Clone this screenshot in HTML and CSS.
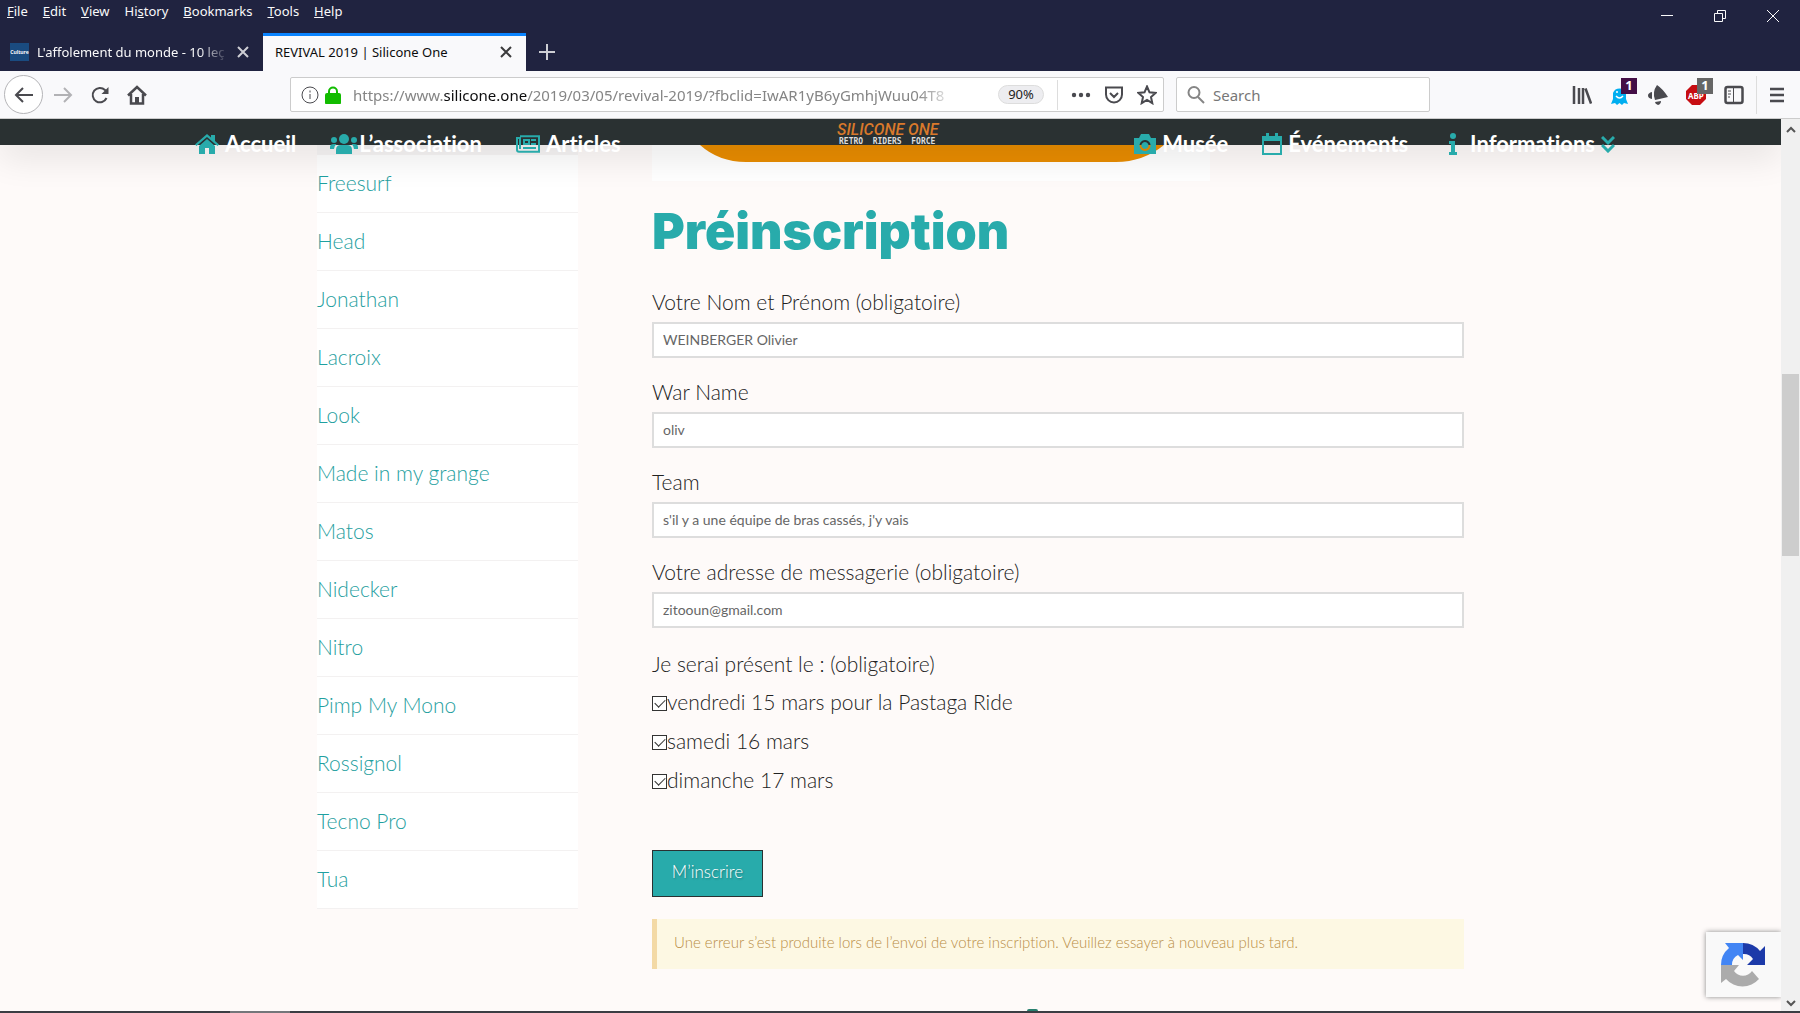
FILE: index.html
```html
<!DOCTYPE html>
<html lang="fr">
<head>
    <title>REVIVAL 2019 | Silicone One</title>
    <meta charset="utf-8">
    <meta name="viewport" content="width=device-width, initial-scale=1.0">
    <link rel="stylesheet" href="styles.css">
</head>
<body>
    <header class="titlebar">
        <div class="titlebar-top">
            <nav class="menubar">
                <button><u>F</u>ile</button>
                <button><u>E</u>dit</button>
                <button><u>V</u>iew</button>
                <button>Hi<u>s</u>tory</button>
                <button><u>B</u>ookmarks</button>
                <button><u>T</u>ools</button>
                <button><u>H</u>elp</button>
            </nav>
            <div class="window-controls">
                <button aria-label="Minimize"><svg width="12" height="12" viewBox="0 0 12 12"><path d="M0 5.500h12"/></svg></button>
                <button aria-label="Restore"><svg width="12" height="12" viewBox="0 0 12 12"><path d="M.5 3.500h8v8h-8zM3.500 3V.5h8v8H9"/></svg></button>
                <button aria-label="Close"><svg width="12" height="12" viewBox="0 0 12 12"><path d="M0 0l12 12M12 0L0 12"/></svg></button>
            </div>
        </div>
        <div class="tabs">
            <div class="tab">
                <span class="favicon">Culture</span>
                <span class="tab-title tab-fade">L'affolement du monde - 10 leç</span>
                <button class="tab-close" aria-label="Close tab"><svg width="12" height="12" viewBox="0 0 12 12"><path d="M1 1l10 10M11 1L1 11"/></svg></button>
            </div>
            <div class="tab tab-active">
                <span class="tab-title">REVIVAL 2019 | Silicone One</span>
                <button class="tab-close" aria-label="Close tab"><svg width="12" height="12" viewBox="0 0 12 12"><path d="M1 1l10 10M11 1L1 11"/></svg></button>
            </div>
            <button class="tab-new" aria-label="New tab"><svg width="16" height="16" viewBox="0 0 16 16"><path d="M8 0v16M0 8h16"/></svg></button>
        </div>
    </header>

    <div class="toolbar">
        <div class="nav-buttons">
            <button class="back" aria-label="Back"><svg width="20" height="20" viewBox="0 0 20 20"><path d="M19 10H2M9 3l-7 7 7 7"/></svg></button>
            <button class="forward" aria-label="Forward"><svg width="20" height="20" viewBox="0 0 20 20"><path d="M1 10h17M11 3l7 7-7 7"/></svg></button>
            <button aria-label="Reload"><svg width="20" height="20" viewBox="0 0 20 20"><path d="M16.500 13A7.200 7.200 0 1 1 15 5l2 2"/><path d="M18.500 2v7h-7z" class="fill"/></svg></button>
            <button aria-label="Home"><svg width="20" height="20" viewBox="0 0 20 20"><path d="M1 10.500L10 2l9 8.500M4 9v9.500h12V9" stroke-width="2.500"/><path d="M8 18v-6h4v6z" class="fill"/></svg></button>
        </div>
        <div class="urlbar">
            <svg width="18" height="18" viewBox="0 0 18 18" class="info"><circle cx="9" cy="9" r="8"/><path d="M9 8v5M9 4.500v2"/></svg>
            <svg width="16" height="18" viewBox="0 0 16 18" class="lock"><path d="M4 9V5.500a4 4 0 0 1 8 0V9"/><rect x="1" y="8" width="14" height="9.500" rx="1"/></svg>
            <div class="url">https://www.<b>silicone.one</b>/2019/03/05/revival-2019/?fbclid=IwAR1yB6yGmhjWuu04T8</div>
            <button class="zoom-level">90%</button>
            <span class="divider"></span>
            <button aria-label="Page actions"><svg width="20" height="20" viewBox="0 0 20 20" class="dots"><circle cx="3" cy="10" r="2.200"/><circle cx="10" cy="10" r="2.200"/><circle cx="17" cy="10" r="2.200"/></svg></button>
            <button aria-label="Save to Pocket"><svg width="20" height="20" viewBox="0 0 20 20"><path d="M2 2.500h16v7a8 8 0 0 1-16 0zM6 8l4 4 4-4"/></svg></button>
            <button aria-label="Bookmark"><svg width="20" height="20" viewBox="0 0 20 20"><path d="M10 1.500l2.500 5.800 6 .6-4.500 4.100 1.300 6.200-5.300-3.200-5.300 3.200L6 12 1.500 7.900l6-.6z"/></svg></button>
        </div>
        <label class="searchbar">
            <svg width="20" height="20" viewBox="0 0 20 20"><circle cx="8" cy="7.500" r="5.500"/><path d="M12 12l6 6"/></svg>
            <input type="search" placeholder="Search" aria-label="Search">
        </label>
        <div class="extensions">
            <button aria-label="Library"><svg width="20" height="20" viewBox="0 0 20 20"><path d="M2 1v18M7 3v16M11 3v16M13.500 3.500L19 18.500" stroke-width="2.500"/></svg></button>
            <button aria-label="Ghostery"><svg width="20" height="20" viewBox="0 0 20 20"><path d="M3 14V8a7 7 0 0 1 13 0v6l2 5-4-1-2 2-2.500-2L7 20l-2-2-4 1z" fill="#00aef0" stroke="none"/><path d="M7 6v2M12 6v2M6 11q3.500 4 7 0" stroke="#fff" stroke-width="1.500"/></svg><span class="badge badge-purple">1</span></button>
            <button aria-label="Announcements"><svg width="20" height="20" viewBox="0 0 20 20"><path d="M9 0q6 4 11 12L7 15Q4 7 9 0zM4 7v7q-4-1-4-3.500T4 7zM7 17l6-1q0 3-3 4-3-1-3-3z" class="fill"/></svg></button>
            <button aria-label="Adblock Plus"><svg width="20" height="20" viewBox="0 0 20 20"><path d="M6 0h8l6 6v8l-6 6H6l-6-6V6z" fill="#c70d12" stroke="none"/><text x="2" y="14" class="abp">ABP</text></svg><span class="badge badge-grey">1</span></button>
            <button aria-label="Sidebars"><svg width="20" height="20" viewBox="0 0 20 20"><rect x="1.500" y="2" width="17" height="16" rx="2" stroke-width="2.500"/><path d="M9.500 2v16M4 6h3M4 9h3M4 12h2" stroke-width="1"/></svg></button>
            <span class="divider"></span>
            <button aria-label="Menu"><svg width="16" height="20" viewBox="0 0 16 20"><path d="M1 4h14M1 10h14M1 16h14" stroke-width="2.500"/></svg></button>
        </div>
    </div>

    <div class="viewport">
        <div class="page">
            <div class="site-header">
                <nav class="site-nav">
                    <a href="#"><svg width="24" height="20" viewBox="0 0 24 20"><path d="M0 10.500L12 0l4 3.500V1h4v6l4 3.500-1.500 1.500L12 3 1.500 12z"/><path d="M4 12l8-7 8 7v8h-6v-6h-4v6H4z"/></svg>Accueil</a>
                    <a href="#" class="tight"><svg width="28" height="20" viewBox="0 0 28 20"><circle cx="14" cy="5" r="5"/><circle cx="4" cy="6" r="3"/><circle cx="24" cy="6" r="3"/><path d="M6 20v-4q0-5 5-5h6q5 0 5 5v4zM0 15v-2q0-3 4-3h2.500Q4 12 4 15zM28 15v-2q0-3-4-3h-2.500Q24 12 24 15z"/></svg>L’association</a>
                    <a href="#"><svg width="24" height="18" viewBox="0 0 24 18"><path d="M4 1.200h19v15.600H3q-2 0-2-2V3h3v11" fill="none" stroke="currentColor" stroke-width="2"/><path fill-rule="evenodd" d="M7 4h7v6H7zM9 6v2h3V6zM15 4h5v2h-5zM15 8h5v2h-5zM7 12h13v2H7z"/></svg>Articles</a>
                </nav>
                <a href="#" class="site-logo" aria-label="Silicone One">
                    <svg width="104" height="26" viewBox="0 0 104 26">
                        <text x="0" y="16" class="logo-name">SILICONE ONE</text>
                        <text x="2" y="25" class="logo-sub">RETRO&#160; RIDERS&#160; FORCE</text>
                    </svg>
                </a>
                <nav class="site-nav site-nav-right">
                    <a href="#"><svg width="22" height="20" viewBox="0 0 22 20"><path fill-rule="evenodd" d="M0 4h5l2-4h8l2 4h5v16H0zM11 6a5.500 5.500 0 1 0 .1 0zM11 8a3.500 3.500 0 1 1-.1 0z"/></svg>Musée</a>
                    <a href="#"><svg width="20" height="22" viewBox="0 0 20 22"><path fill-rule="evenodd" d="M0 3h4V0h3v3h6V0h3v3h4v19H0zM2 8v12h16V8z"/></svg>Événements</a>
                    <a href="#"><svg width="22" height="22" viewBox="-7 0 22 22"><circle cx="4" cy="3" r="3"/><path d="M0 8h6v11h2v3H0v-3h2v-8H0z"/></svg>Informations<svg width="14" height="17" viewBox="0 0 14 17" class="chevrons"><path d="M1 1l6 6 6-6M1 9l6 6 6-6"/></svg></a>
                </nav>
            </div>

            <div class="content">
                <ul class="brands">
                    <li><a href="#">Freesurf</a></li>
                    <li><a href="#">Head</a></li>
                    <li><a href="#">Jonathan</a></li>
                    <li><a href="#">Lacroix</a></li>
                    <li><a href="#">Look</a></li>
                    <li><a href="#">Made in my grange</a></li>
                    <li><a href="#">Matos</a></li>
                    <li><a href="#">Nidecker</a></li>
                    <li><a href="#">Nitro</a></li>
                    <li><a href="#">Pimp My Mono</a></li>
                    <li><a href="#">Rossignol</a></li>
                    <li><a href="#">Tecno Pro</a></li>
                    <li><a href="#">Tua</a></li>
                </ul>

                <main class="article">
                    <div class="poster"><svg width="464" height="17" viewBox="0 0 464 17"><path d="M0 0Q19 17 46 17H416Q443 17 464 0z"/></svg></div>
                    <h1>Préinscription</h1>
                    <form class="signup">
                        <div class="field">
                            <label for="nom">Votre Nom et Prénom (obligatoire)</label>
                            <input type="text" id="nom" value="WEINBERGER Olivier">
                        </div>
                        <div class="field">
                            <label for="warname">War Name</label>
                            <input type="text" id="warname" value="oliv">
                        </div>
                        <div class="field">
                            <label for="team">Team</label>
                            <input type="text" id="team" value="s'il y a une équipe de bras cassés, j'y vais">
                        </div>
                        <div class="field">
                            <label for="email">Votre adresse de messagerie (obligatoire)</label>
                            <input type="email" id="email" value="zitooun@gmail.com">
                        </div>
                        <fieldset class="days">
                            <legend>Je serai présent le : (obligatoire)</legend>
                            <label><input type="checkbox" checked>vendredi 15 mars pour la Pastaga Ride</label>
                            <label><input type="checkbox" checked>samedi 16 mars</label>
                            <label><input type="checkbox" checked>dimanche 17 mars</label>
                        </fieldset>
                        <button type="button" class="submit">M’inscrire</button>
                        <div class="alert">Une erreur s’est produite lors de l’envoi de votre inscription. Veuillez essayer à nouveau plus tard.</div>
                    </form>
                </main>
            </div>

            <div class="next-icon"></div>
            <div class="recaptcha">
                <svg width="44" height="44" viewBox="0 0 44 44">
                    <path d="M22 0a22 22 0 0 1 17 8l5-5v19H26l6-6a11 11 0 0 0-10-5z" fill="#1c3aa9"/>
                    <path d="M22 0v17l-5-5a11 11 0 0 0-6 10H0A22 22 0 0 1 8 5L4 0z" fill="#4285f4"/>
                    <path d="M0 22h18l-5 6a11 11 0 0 0 18 0l7 8a22 22 0 0 1-33 0l-5 4z" fill="#ababab"/>
                </svg>
            </div>
        </div>
        <div class="scrollbar">
            <svg width="10" height="8" viewBox="0 0 10 8"><path d="M1 6l4-4 4 4"/></svg>
            <div class="scroll-track"><div class="scroll-thumb"></div></div>
            <svg width="10" height="8" viewBox="0 0 10 8"><path d="M1 2l4 4 4-4"/></svg>
        </div>
    </div>
    <div class="taskbar"></div>
</body>
</html>
```

FILE: styles.css
```css
* {
    box-sizing: border-box;
}
body {
    margin: 0;
    height: 100vh;
    display: flex;
    flex-direction: column;
    overflow: hidden;
    font-family: "Noto Sans", "Open Sans", sans-serif;
    font-size: 13px;
    background: #fefaf9;
}
button {
    background: none;
    border: none;
    padding: 0;
    margin: 0;
    font: inherit;
    color: inherit;
}
svg {
    display: block;
    flex: none;
    fill: none;
    stroke: currentColor;
    stroke-width: 2;
}
a {
    text-decoration: none;
}

/* window title, menu and tabs */
.titlebar {
    background: #202340;
    color: #f9f9fa;
}
.titlebar-top {
    display: flex;
    justify-content: space-between;
    height: 33px;
}
.menubar {
    display: flex;
    gap: 15px;
    padding-left: 7px;
    height: 22px;
    align-items: center;
}
.window-controls {
    display: flex;
    gap: 41px;
    padding: 10px 21px 0 0;
    align-items: flex-start;
}
.window-controls svg {
    stroke-width: 1;
}
.tabs {
    display: flex;
    height: 38px;
}
.tab {
    width: 263px;
    display: flex;
    align-items: center;
    gap: 8px;
    padding: 0 14px 0 10px;
}
.tab-active {
    background: #f9f9fb;
    color: #0c0c0d;
    border-top: 3px solid #0a84ff;
    padding-left: 12px;
    padding-bottom: 3px;
}
.tab-title {
    flex: 1;
    white-space: nowrap;
}
.tab-fade {
    -webkit-mask-image: linear-gradient(to left, transparent, #000 30px);
    mask-image: linear-gradient(to left, transparent, #000 30px);
}
.favicon {
    width: 19px;
    height: 18px;
    line-height: 18px;
    background: #1a4b80;
    font-size: 5px;
    font-weight: bold;
    text-align: center;
}
.tab-close {
    opacity: 0.8;
}
.tab-new {
    margin-left: 13px;
    opacity: 0.8;
}

/* toolbar */
.toolbar {
    display: flex;
    align-items: center;
    height: 48px;
    background: #f9f9fb;
    color: #4a4a4f;
    border-bottom: 1px solid #ccc;
    padding-right: 15px;
    font-size: 15px;
}
.nav-buttons {
    display: flex;
    align-items: center;
    gap: 17px;
    width: 290px;
    padding-left: 4px;
}
.back {
    width: 39px;
    height: 39px;
    border: 1px solid #b5b5b8;
    border-radius: 50%;
    background: #fff;
    display: flex;
    align-items: center;
    justify-content: center;
    margin-right: -7px;
}
.forward {
    opacity: 0.4;
}
.toolbar .fill {
    fill: currentColor;
    stroke: none;
}
.urlbar, .searchbar {
    display: flex;
    align-items: center;
    height: 35px;
    background: #fff;
    border: 1px solid #ccc;
    border-radius: 2px;
}
.urlbar {
    flex: 1;
    gap: 13px;
    padding: 0 6px 0 10px;
}
.info {
    stroke-width: 1;
}
.lock {
    margin: 0 -1px 0 -7px;
    color: #12bc00;
}
.lock rect {
    fill: currentColor;
}
.url {
    flex: 1;
    width: 0;
    overflow: hidden;
    white-space: nowrap;
    color: #858585;
    margin-right: 28px;
    -webkit-mask-image: linear-gradient(to left, transparent, #000 40px);
    mask-image: linear-gradient(to left, transparent, #000 40px);
}
.url b {
    font-weight: normal;
    color: #0c0c0d;
}
.zoom-level {
    width: 46px;
    height: 19px;
    line-height: 17px;
    border: 1px solid #ddd;
    border-radius: 10px;
    background: #ededf0;
    color: #222;
    font-size: 13px;
}
.divider {
    width: 1px;
    height: 30px;
    background: #ddd;
}
.dots {
    fill: currentColor;
    stroke: none;
}
.searchbar {
    width: 254px;
    margin: 0 142px 0 12px;
    gap: 7px;
    padding: 0 9px;
    color: #858585;
}
.searchbar input {
    flex: 1;
    min-width: 0;
    border: none;
    padding: 0;
    outline: none;
    font: inherit;
}
.searchbar input::placeholder {
    color: #777;
}
.extensions {
    display: flex;
    align-items: center;
    gap: 18px;
}
.extensions button {
    position: relative;
}
.extensions .divider {
    height: 38px;
    margin: 0 -6px;
}
.badge {
    position: absolute;
    left: 11px;
    top: -7px;
    width: 16px;
    height: 16px;
    line-height: 15px;
    text-align: center;
    font-size: 13px;
    font-weight: bold;
    color: #fff;
}
.badge-purple {
    background: #440f46;
}
.badge-grey {
    background: #666;
}
.abp {
    font-size: 8px;
    font-weight: bold;
    fill: #fff;
    stroke: none;
}

/* page */
.viewport {
    flex: 1;
    min-height: 0;
    display: flex;
}
.page {
    flex: 1;
    position: relative;
    overflow: hidden;
    background: #fefaf9;
    font-family: Lato, "Noto Sans", sans-serif;
    font-weight: 300;
    font-variant-ligatures: none;
    color: #222;
}
.site-header {
    position: relative;
    z-index: 1;
    display: flex;
    justify-content: space-between;
    height: 26px;
    padding: 0 166px 0 195px;
    background: #2a3132;
    box-shadow: 0 10px 36px rgba(0, 0, 0, 0.12);
}
.site-nav {
    display: flex;
    align-items: center;
    gap: 34px;
    height: 50px;
}
.site-nav a {
    display: flex;
    align-items: center;
    gap: 6px;
    font-size: 22px;
    font-weight: bold;
    line-height: 26px;
    color: #fff;
}
.site-nav a.tight {
    gap: 1px;
}
.site-nav svg {
    fill: currentColor;
    stroke: none;
    color: #28abab;
}
.site-nav .chevrons {
    fill: none;
    stroke: currentColor;
    stroke-width: 3;
}
.site-logo {
    margin-left: 24px;
}
.site-logo svg {
    stroke: none;
}
.logo-name {
    font-family: Roboto, sans-serif;
    font-size: 16px;
    font-weight: 500;
    font-style: italic;
    fill: #d9792b;
}
.logo-sub {
    font-family: "DejaVu Sans Mono", monospace;
    font-size: 8px;
    font-weight: bold;
    fill: #ddd;
}
.content {
    display: flex;
    gap: 74px;
    padding: 0 317px;
}
.brands {
    width: 261px;
    margin: 0;
    padding: 0;
    list-style: none;
    align-self: flex-start;
    background: #fff;
    border-top: 10px solid #f7f5f5;
}
.brands li {
    height: 58px;
    padding-top: 14px;
    border-bottom: 1px solid #f3f1f1;
    font-size: 21px;
    line-height: 28px;
}
.brands a {
    color: #1fa0a0;
}
.article {
    flex: 1;
}
.poster {
    width: 558px;
    height: 36px;
    background: #fff;
    padding-left: 48px;
}
.poster svg {
    fill: #e88c00;
    stroke: none;
}
h1 {
    margin: 18px 0 24px;
    font-family: Inter, sans-serif;
    font-size: 50px;
    font-weight: 900;
    line-height: 64px;
    color: #28abab;
}
.field {
    margin-bottom: 19px;
}
.field label {
    display: block;
    font-size: 21px;
    line-height: 30px;
    margin-bottom: 5px;
}
.field input {
    display: block;
    width: 100%;
    height: 36px;
    padding: 0 9px 2px;
    border: 2px solid #ddd;
    background: #fff;
    font-family: inherit;
    font-size: 14px;
    color: #666;
}
.days {
    margin: 22px 0 51px;
    padding: 0;
    border: none;
    font-size: 21px;
}
.days legend {
    padding: 0;
    line-height: 28px;
    margin-bottom: 4px;
}
.days label {
    display: flex;
    align-items: center;
    height: 39px;
}
.days input {
    appearance: none;
    width: 15px;
    height: 15px;
    margin: 3px 0 0;
    border: 1px solid #333;
    background: #fff;
}
.days input::after {
    content: "";
    display: block;
    width: 9px;
    height: 5px;
    margin: 2px 0 0 2px;
    border: solid #333;
    border-width: 0 0 1px 1px;
    transform: rotate(-45deg);
}
.submit {
    display: block;
    width: 111px;
    height: 47px;
    padding-bottom: 4px;
    margin-bottom: 22px;
    border: 1px solid #2a3132;
    background: #28abab;
    color: #fff;
    font-size: 17px;
    text-shadow: 1px 1px 2px rgba(0, 0, 0, 0.3);
}
.alert {
    padding: 12px 17px 15px;
    border-left: 5px solid #f3d9a5;
    background: #fdf8e3;
    color: #b98d45;
    font-size: 15px;
    line-height: 23px;
}
.next-icon {
    position: absolute;
    left: 1027px;
    bottom: 0;
    width: 11px;
    height: 2px;
    border-radius: 5px 5px 0 0;
    background: #28806f;
}
.recaptcha {
    position: absolute;
    right: 0;
    bottom: 14px;
    width: 75px;
    height: 65px;
    padding: 11px 15px;
    background: #f9f9f9;
    box-shadow: 0 0 5px #888;
}
.recaptcha svg {
    stroke: none;
}

/* scrollbar */
.scrollbar {
    width: 19px;
    display: flex;
    flex-direction: column;
    align-items: center;
    padding: 7px 0 4px;
    background: #f0f0f0;
    color: #555;
}
.scroll-track {
    flex: 1;
    width: 100%;
    padding: 0 1px;
}
.scroll-thumb {
    height: 21%;
    margin-top: 240px;
    background: #cdcdcd;
}
.taskbar {
    height: 2px;
    background: linear-gradient(to right, #3b3d43 230px, #74767a 230px, #74767a 290px, #3b3d43 290px);
}
```
